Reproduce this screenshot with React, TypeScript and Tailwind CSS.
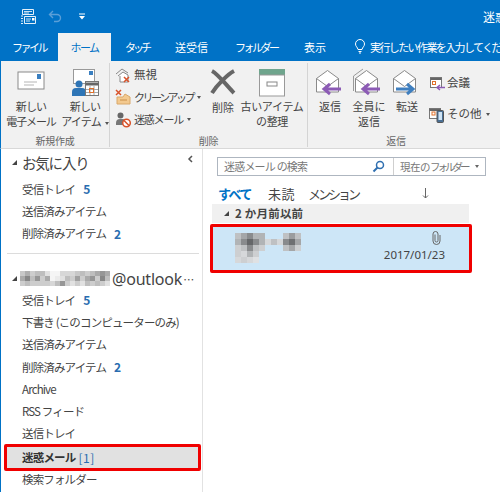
import { ReactNode } from 'react';

const jp = "font-['Noto_Sans_CJK_JP','Noto_Sans',sans-serif]";

// モザイク部分
const Mosaic = ({ cells, size, className }: { cells: number[][]; size: number; className?: string }) => (
  <svg width={cells[0].length * size} height={cells.length * size} className={className}>
    {cells.map((row, y) =>
      row.map((v, x) =>
        v ? <rect key={`${x}-${y}`} x={x * size} y={y * size} width={size} height={size} fill={`rgb(${v},${v},${v})`} /> : null
      )
    )}
  </svg>
);

const accountCells = [
  [200, 175, 205, 190, 190, 225, 245, 245, 215, 215, 215, 200, 190, 205, 190, 170, 150, 170],
  [170, 135, 190, 150, 205, 170, 245, 235, 225, 190, 205, 160, 205, 170, 150, 205, 135, 190],
  [205, 190, 205, 205, 205, 205, 215, 190, 150, 205, 225, 205, 225, 190, 205, 190, 205, 225],
];

const senderCells = [
  [190, 160, 130, 175, 175, 0, 0, 0, 190, 150, 190],
  [175, 130, 90, 130, 175, 215, 190, 215, 130, 100, 160],
  [205, 190, 130, 190, 205, 0, 0, 0, 190, 160, 205],
  [205, 215, 175, 205, 0, 0, 0, 0, 0, 0, 0],
  [215, 205, 215, 225, 0, 0, 0, 0, 0, 0, 0],
];

const Arrow = ({ color, flip }: { color: string; flip?: boolean }) => (
  <g transform={flip ? 'translate(32,0) scale(-1,1)' : undefined}>
    <path d="M10 22h17M16 17l-6 5 6 5" stroke={color} strokeWidth="3" fill="none" />
  </g>
);

const Envelope = () => (
  <>
    <path d="M2.5 11.5L13.5 3.5l11 8V25H2.5z" fill="#fff" stroke="#8a8a8a" />
    <path d="M2.5 11.5l11 8 11-8" fill="none" stroke="#8a8a8a" />
  </>
);

const ReplyIcon = ({ all, forward }: { all?: boolean; forward?: boolean }) => (
  <svg width="32" height="30" viewBox="0 0 32 30">
    {all && <path d="M0.5 24V9L10 2" fill="none" stroke="#9a9a9a" />}
    <Envelope />
    <Arrow color={forward ? '#3f7fbf' : '#8c5bb5'} flip={forward} />
  </svg>
);

const BigLabel = ({ children, width, icon }: { children: ReactNode; width: string; icon: ReactNode }) => (
  <div className={`flex flex-col items-center ${width}`}>
    <div className="h-[36px] flex items-end justify-center">{icon}</div>
    <div className="text-center text-[11px] leading-[15px] text-[#444] tracking-[-0.8px] whitespace-nowrap mt-[2px]">{children}</div>
  </div>
);

const Caret = () => <span className="inline-block ml-[4px] align-middle border-x-[2.5px] border-x-transparent border-t-[3px] border-t-[#555]" />;

const SmallRow = ({ icon, children }: { icon: ReactNode; children: ReactNode }) => (
  <div className="flex items-center h-[22px] text-[11px] text-[#444] whitespace-nowrap">
    <span className="w-[17px] h-[17px] mr-[1px] shrink-0">{icon}</span>
    {children}
  </div>
);

const Sep = () => <div className="w-px h-[84px] bg-[#d4d4d4] self-start mt-[2px] shrink-0" />;

const Tri = () => <span className="inline-block w-0 h-0 border-l-[5px] border-l-transparent border-b-[5px] border-b-[#444]" />;

const NavRow = ({ label, count }: { label: string; count?: string }) => (
  <div className="h-[22.33px] flex items-center pl-[21px] text-[11.5px] text-[#444] tracking-[-0.85px] whitespace-nowrap">
    {label}
    {count && <span className="ml-[8px] text-[#2a6db0] font-bold text-[12px] tracking-normal">{count}</span>}
  </div>
);

export default function App() {
  return (
    <div className={`w-[500px] h-[492px] overflow-hidden bg-white flex flex-col ${jp}`}>
      {/* タイトルバー */}
      <div className="h-[33px] bg-[#0072c6] flex items-center relative shrink-0">
        <svg width="17" height="17" viewBox="0 0 17 17" className="ml-[20px]">
          <path d="M2.500 1.500h11v5h-11zM1 8h2M1 10.500h2M1 13h2M1 15.500h2M4.500 8.500h11v7h-11z" fill="none" stroke="#e4f0fa" />
          <path d="M4 3.500h8M4 5h5M6 11h5M6 13h4" stroke="#fff" strokeWidth="0.8" />
          <rect x="12" y="10" width="2.500" height="2.500" fill="#fff" />
        </svg>
        <svg width="15" height="13" viewBox="0 0 15 13" className="ml-[11px]">
          <path d="M5 1L1.500 4.500 5 8M2 4.500h7a3.500 3.500 0 0 1 0 7H6" fill="none" stroke="#5a9fd8" strokeWidth="1.400" />
        </svg>
        <svg width="6" height="7" viewBox="0 0 6 7" className="ml-[16px]">
          <path d="M0 1h6" stroke="#fff" />
          <path d="M0 3h6L3 6.500z" fill="#fff" />
        </svg>
        <span className="ml-auto text-[12px] text-white whitespace-nowrap w-[17px] overflow-hidden">迷惑</span>
      </div>

      {/* タブ */}
      <div className="h-[28px] bg-[#0072c6] flex text-[11px] text-white whitespace-nowrap shrink-0">
        <div className="w-[58px] shrink-0 pl-[12px] pt-[6px] tracking-[-2.5px]">ファイル</div>
        <div className="w-[53px] shrink-0 bg-[#f1f1f1] text-[#0072c6] text-center pt-[6px] tracking-[-1.500px]">ホーム</div>
        <div className="w-[64px] shrink-0 pl-[14px] pt-[6px] tracking-[-3px]">タッチ</div>
        <div className="w-[60px] shrink-0 pt-[6px]">送受信</div>
        <div className="w-[69px] shrink-0 pt-[6px] tracking-[-2.500px]">フォルダー</div>
        <div className="w-[50px] shrink-0 pt-[6px]">表示</div>
        <div className="flex items-start pt-[6px] shrink-0">
          <svg width="12" height="15" viewBox="0 0 12 15">
            <path d="M4 10.500C3.500 8 1.500 7.500 1.500 5a4.500 4.500 0 0 1 9 0c0 2.500-2 3-2.500 5.500zM4.500 12.500h3M5 14h2" fill="none" stroke="#fff" />
          </svg>
          <span className="ml-[4px] tracking-[-1.600px]">実行したい作業を入力してください</span>
        </div>
      </div>

      {/* リボン */}
      <div className="h-[88px] bg-[#f1f1f1] border-b border-b-[#d8d8d8] border-l border-l-[#0072c6] flex shrink-0 overflow-hidden">
        <div className="w-[108px] shrink-0 flex flex-col">
          <div className="flex h-[73px]">
            <BigLabel
              width="w-[60px]"
              icon={
                <svg width="28" height="20" viewBox="0 0 28 20" className="mb-[6px]">
                  <rect x="1" y="1" width="26" height="17" fill="#fff" stroke="#8a8a8a" />
                  <rect x="20" y="3" width="4" height="5" fill="#3a7fc0" />
                  <path d="M7 11h13M7 14h10" stroke="#b5b5b5" />
                </svg>
              }
            >
              新しい<br /><span className="tracking-[-1.100px]">電子メール</span>
            </BigLabel>
            <BigLabel
              width="w-[48px]"
              icon={
                <svg width="28" height="28" viewBox="0 0 28 28">
                  <rect x="2.500" y="0.500" width="21" height="14" fill="#fff" stroke="#999" />
                  <rect x="18" y="2" width="4" height="4" fill="#3a7fc0" />
                  <circle cx="8" cy="15" r="3.500" fill="#2e75b6" />
                  <path d="M1 27v-4a4 4 0 0 1 4-4h6a4 4 0 0 1 4 4v4z" fill="#2e75b6" />
                  <rect x="14.500" y="12.500" width="13" height="14" fill="#fff" stroke="#777" />
                  <path d="M14.500 15h13" stroke="#666" strokeWidth="3" />
                  <path d="M19 17v9M23 17v9M15 20.500h12M15 23.500h12" stroke="#aaa" />
                  <rect x="18.500" y="19.500" width="4" height="4" fill="none" stroke="#e0702a" />
                </svg>
              }
            >
              新しい<br />アイテム<Caret />
            </BigLabel>
          </div>
          <div className="text-center text-[10px] text-[#666] tracking-[-0.3px] leading-[14px]">新規作成</div>
        </div>
        <Sep />

        <div className="w-[197px] shrink-0 flex flex-col">
          <div className="flex h-[73px]">
            <div className="w-[95px] pl-[5px] pt-[3px] flex flex-col">
              <SmallRow
                icon={
                  <svg width="17" height="17" viewBox="0 0 17 17">
                    <path d="M1 7l6-5 6 4" fill="none" stroke="#888" />
                    <path d="M3 9l5-4 5 3v7H5V9" fill="#fff" stroke="#888" />
                    <path d="M9 10l5 5M14 10l-5 5" stroke="#d8522a" strokeWidth="1.500" />
                  </svg>
                }
              >
                <span className="text-[11.500px] ml-[1px]">無視</span>
              </SmallRow>
              <SmallRow
                icon={
                  <svg width="17" height="17" viewBox="0 0 17 17">
                    <path d="M1 1l5 5M6 1L1 6" stroke="#d8522a" strokeWidth="1.500" />
                    <path d="M2 8h6l2-3 5 3v7H2z" fill="#f3c98f" stroke="#d9a86a" />
                    <path d="M5 11h7" stroke="#c98f4a" />
                  </svg>
                }
              >
                <span className="tracking-[-2.500px] ml-[1px]">クリーンアップ</span><Caret />
              </SmallRow>
              <SmallRow
                icon={
                  <svg width="17" height="17" viewBox="0 0 17 17">
                    <circle cx="5.500" cy="4.500" r="3" fill="#666" />
                    <path d="M1 14v-2a4 4 0 0 1 4-4h2a4 4 0 0 1 3 1v5z" fill="#777" />
                    <circle cx="11.500" cy="12" r="3.800" fill="#fff" stroke="#d8522a" strokeWidth="1.500" />
                    <path d="M9 9.500l5 5" stroke="#d8522a" strokeWidth="1.500" />
                  </svg>
                }
              >
                <span className="tracking-[-1.200px] ml-[1px]">迷惑メール</span><Caret />
              </SmallRow>
            </div>
            <BigLabel
              width="w-[36px]"
              icon={
                <svg width="28" height="26" viewBox="0 0 28 26" className="mb-[2px]">
                  <path d="M3 2c6 3 16 16 22 22M25 2C19 5 8 16 3 24" fill="none" stroke="#666" strokeWidth="4" />
                </svg>
              }
            >
              <span className="block mt-[1px] tracking-normal">削除</span>
            </BigLabel>
            <BigLabel
              width="w-[62px]"
              icon={
                <svg width="28" height="28" viewBox="0 0 28 28">
                  <rect x="1" y="0" width="26" height="6" fill="#6fa58d" />
                  <rect x="1.500" y="6" width="25" height="21" fill="#fff" stroke="#999" />
                  <rect x="9" y="13" width="10" height="4" fill="#fff" stroke="#888" />
                </svg>
              }
            >
              <span className="tracking-[-0.300px]">古いアイテム<br />の整理</span>
            </BigLabel>
          </div>
          <div className="text-center text-[10px] text-[#666] tracking-[-0.3px] leading-[14px]">削除</div>
        </div>
        <Sep />

        <div className="flex-1 flex flex-col">
          <div className="flex h-[73px] pl-[3px]">
            <BigLabel width="w-[38px]" icon={<ReplyIcon />}><span className="tracking-normal">返信</span></BigLabel>
            <BigLabel width="w-[40px]" icon={<ReplyIcon all />}><span className="tracking-normal">全員に<br />返信</span></BigLabel>
            <BigLabel width="w-[36px]" icon={<ReplyIcon forward />}><span className="tracking-normal">転送</span></BigLabel>
            <div className="pl-[4px] pt-[11px] flex flex-col gap-[9px]">
              <SmallRow
                icon={
                  <svg width="17" height="17" viewBox="0 0 17 17">
                    <rect x="1.500" y="2.500" width="11" height="10" fill="#fff" stroke="#777" />
                    <path d="M1.500 4h11" stroke="#666" strokeWidth="2" />
                    <rect x="3.500" y="6.500" width="3" height="3" fill="none" stroke="#e0702a" />
                    <path d="M8 12.500h8M11 10l-3 2.500 3 2.500" fill="none" stroke="#8c5bb5" strokeWidth="1.500" />
                  </svg>
                }
              >
                <span className="text-[11.500px]">会議</span>
              </SmallRow>
              <SmallRow
                icon={
                  <svg width="17" height="17" viewBox="0 0 17 17">
                    <rect x="0.500" y="2.500" width="11" height="10" fill="#fff" stroke="#777" />
                    <path d="M0.500 4h11" stroke="#666" strokeWidth="2" />
                    <rect x="3" y="6" width="3" height="3" fill="none" stroke="#e0702a" />
                    <rect x="8" y="4.500" width="6.500" height="12" rx="1" fill="#4a6f94" stroke="#555" />
                    <rect x="9.500" y="6" width="3.500" height="8" fill="#cfe4f5" />
                  </svg>
                }
              >
                <span className="text-[11.500px]">その他</span><Caret />
              </SmallRow>
            </div>
          </div>
          <div className="text-center text-[10px] text-[#666] tracking-[-0.3px] leading-[14px] pr-[16px]">返信</div>
        </div>
      </div>

      {/* 本体 */}
      <div className="flex-1 flex min-h-0">
        {/* フォルダーウィンドウ */}
        <div className="w-[203px] shrink-0 border-l border-l-[#0072c6] border-r border-r-[#e2e2e2] flex flex-col bg-white">
          <div className="h-[29px] pb-[2px] flex items-center pl-[11px] relative">
            <Tri />
            <span className="ml-[5px] text-[14.500px] text-[#444] tracking-[-1.200px]">お気に入り</span>
            <svg width="6" height="8" viewBox="0 0 6 8" className="absolute left-[186px] top-[6px]">
              <path d="M5 1L2 4l3 3" fill="none" stroke="#555" strokeWidth="1.500" />
            </svg>
          </div>
          <div>
            <NavRow label="受信トレイ" count="5" />
            <NavRow label="送信済みアイテム" />
            <NavRow label="削除済みアイテム" count="2" />
          </div>
          <div className="h-px bg-[#dcdcdc] ml-[6px] mr-[3px] mt-[8px]" />
          <div className="h-[20px] flex items-center pl-[11px] mt-[15px]">
            <Tri />
            <Mosaic cells={accountCells} size={5} className="ml-[3px] mr-[2px]" />
            <span className="text-[16px] text-[#444] font-['Noto_Sans',sans-serif] whitespace-nowrap tracking-[-0.2px]">@outlook</span>
            <span className="text-[11px] text-[#444] ml-[1px]">⋯</span>
          </div>
          <div>
            <NavRow label="受信トレイ" count="5" />
            <NavRow label="下書き (このコンピューターのみ)" />
            <NavRow label="送信済みアイテム" />
            <NavRow label="削除済みアイテム" count="2" />
            <NavRow label="Archive" />
            <NavRow label="RSS フィード" />
            <NavRow label="送信トレイ" />
          </div>
          <div className="h-[27px] -mt-[1px] ml-[3px] mr-[1px] bg-[#e1e1e1] border-[3px] border-[#f00000] rounded-[2px] flex items-center pl-[15px] text-[11.500px] font-bold text-[#333] tracking-[-0.8px] whitespace-nowrap">
            迷惑メール
            <span className="ml-[3px] font-normal text-[#2a6db0] text-[12px] tracking-[0.5px]">[1]</span>
          </div>
          <div className="mt-[-3px]">
            <NavRow label="検索フォルダー" />
          </div>
        </div>

        {/* メッセージ一覧 */}
        <div className="flex-1 min-w-0 pl-[7px] pr-[14px]">
          <div className="mt-[8px] ml-[7px] h-[19px] flex border border-[#aeb6c0] text-[11px] text-[#777] tracking-[-0.8px] w-[269px]">
            <div className="w-[175px] flex items-center pl-[6px] relative">
              迷惑メール の検索
              <svg width="13" height="13" viewBox="0 0 13 13" className="ml-auto mr-[8px]">
                <circle cx="8" cy="5" r="3.500" fill="none" stroke="#2f6fb0" strokeWidth="1.500" />
                <path d="M5.500 7.500L1.500 11.500" stroke="#2f6fb0" strokeWidth="2" />
              </svg>
            </div>
            <div className="flex-1 border-l border-l-[#cfcfcf] flex items-center pl-[6px] text-[10.500px] whitespace-nowrap">
              <span className="tracking-[-0.500px]">現在の</span>
              <span className="tracking-[-3px]">フォルダー</span>
              <span className="ml-auto mr-[6px] border-x-[2.5px] border-x-transparent border-t-[3px] border-t-[#666]" />
            </div>
          </div>
          <div className="h-[26px] flex items-center pl-[8px] pt-[9px] text-[#444] text-[13px] whitespace-nowrap">
            <span className="text-[#0072c6] font-bold w-[48px] text-[13px] tracking-[-1.500px]">すべて</span>
            <span className="w-[42px] tracking-[0.5px] pl-[2px]">未読</span>
            <span className="tracking-[-3px]">メンション</span>
            <svg width="7" height="11" viewBox="0 0 7 11" className="ml-[64px]">
              <path d="M3.500 0v10M1 7.500l2.500 2.500L6 7.500" fill="none" stroke="#666" />
            </svg>
          </div>
          <div className="mt-[2px] ml-[2px] w-[257px] h-[19px] bg-[#f0f0f0] flex items-center pl-[12px] text-[11.500px] font-bold text-[#444] tracking-[0.2px]">
            <Tri />
            <span className="ml-[6px]">2 か月前以前</span>
          </div>
          <div className="mt-[1px] w-[262px] h-[49px] bg-[#cde6f7] border-[3px] border-[#f00000] rounded-[2px] flex pl-[22px] pt-[6px]">
            <Mosaic cells={senderCells} size={6} className="opacity-90" />
            <div className="ml-auto mr-[24px] flex flex-col items-end -mt-[2px]">
              <svg width="9" height="14" viewBox="0 0 9 14" className="mr-[4px]">
                <path d="M3 3.500v6a1.500 1.500 0 0 0 3 0V3a2.500 2.500 0 0 0-5 0v7a3.500 3.500 0 0 0 7 0V4" fill="none" stroke="#666" />
              </svg>
              <span className="text-[11.500px] text-[#444] font-['Noto_Sans',sans-serif] leading-[14px] mt-[3px] whitespace-nowrap">2017/01/23</span>
            </div>
          </div>
        </div>
      </div>
    </div>
  );
}
